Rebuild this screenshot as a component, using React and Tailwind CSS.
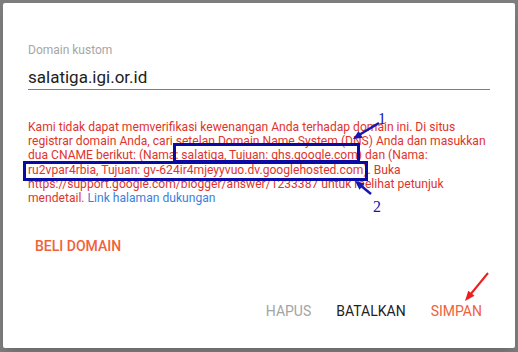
import React from 'react';

const App = () => {
  return (
    <div className="relative w-[518px] h-[352px] bg-[#7d7d7d] p-[3px] overflow-hidden" style={{ fontFamily: 'Roboto, "Liberation Sans", sans-serif' }}>
      {/* Dialog */}
      <div className="w-[512px] h-[345px] bg-white rounded-[2px] shadow-lg flex flex-col pt-[39px] px-[25px] pb-[19px]">
        <label className="text-[12px] leading-4 text-[#a6a6a6]">Domain kustom</label>
        <div className="mt-[7px] text-[17px] leading-6 text-[#212121] border-b border-[#dd5b3c]">salatiga.igi.or.id</div>

        <p className="mt-[30px] w-[467px] text-[12.1px] leading-[14.2px] text-[#e0342c]">
          Kami tidak dapat memverifikasi kewenangan Anda terhadap domain ini. Di situs registrar domain Anda, cari setelan Domain Name System (DNS) Anda dan masukkan dua CNAME berikut: (Nama: salatiga, Tujuan: ghs.google.com) dan (Nama: ru2vpar4rbia, Tujuan: gv-624ir4mjeyyvuo.dv.googlehosted.com). Buka https://support.google.com/blogger/answer/1233387 untuk melihat petunjuk mendetail.{' '}
          <a className="text-[#3d7fd9]">Link halaman dukungan</a>
        </p>

        <div className="mt-[23px] flex">
          <button className="h-9 px-2 -ml-[1px] text-[14px] font-medium text-[#f0623a] uppercase">Beli Domain</button>
        </div>

        <div className="mt-auto flex justify-end gap-[9px]">
          <button className="h-9 px-2 text-[14px] text-[#a3a3a3]">HAPUS</button>
          <button className="h-9 px-2 text-[14px] text-[#222222]">BATALKAN</button>
          <button className="h-9 px-2 text-[14px] text-[#f0623a]">SIMPAN</button>
        </div>
      </div>

      {/* Annotations drawn over the screenshot */}
      <svg className="absolute inset-0 pointer-events-none" width="518" height="352" viewBox="0 0 518 352">
        <rect x="174.5" y="144.5" width="184" height="17" fill="none" stroke="#0a0aa5" strokeWidth="3" />
        <rect x="24.5" y="162.5" width="342" height="17" fill="none" stroke="#0a0aa5" strokeWidth="3" />

        <line x1="379" y1="123" x2="359" y2="135" stroke="#1717b0" strokeWidth="2.5" />
        <polygon points="353,139 362.8,137.7 358.6,130.9" fill="#1717b0" />
        <text x="378" y="124" fontFamily='"Liberation Serif", serif' fontSize="16" fill="#1717b0">1</text>

        <line x1="371" y1="194" x2="360" y2="185" stroke="#1717b0" strokeWidth="2.5" />
        <polygon points="355,181 364.5,183.6 359.5,189.8" fill="#1717b0" />
        <text x="373" y="212" fontFamily='"Liberation Serif", serif' fontSize="16" fill="#1717b0">2</text>

        <line x1="488" y1="273" x2="470" y2="295" stroke="#ee1c1c" strokeWidth="2" />
        <polygon points="465,301 474.5,295.8 468.3,290.8" fill="#ee1c1c" />
      </svg>
    </div>
  );
};

export default App;
